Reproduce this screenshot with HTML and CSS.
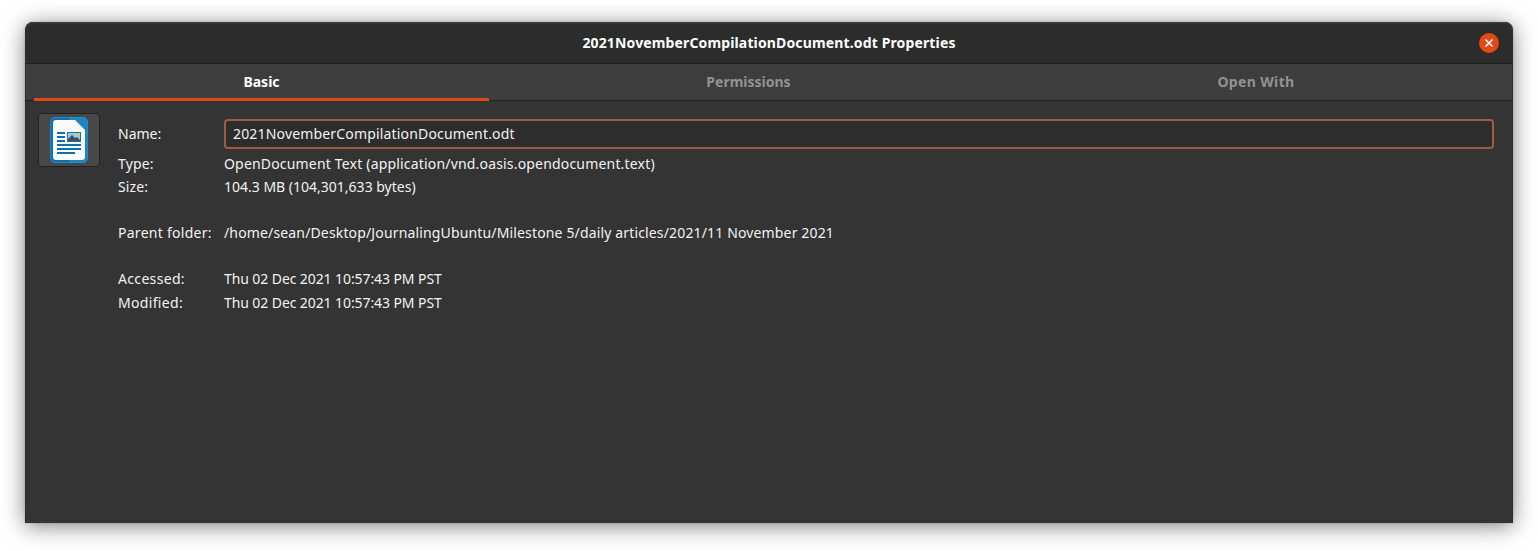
FILE: index.html
```html
<!DOCTYPE html>
<html lang="en">
<head>
<meta charset="utf-8">
<title>2021NovemberCompilationDocument.odt Properties</title>
<link rel="stylesheet" href="styles.css">
</head>
<body>
<main class="window">
  <header class="titlebar">
    <h1 class="title">2021NovemberCompilationDocument.odt Properties</h1>
    <button class="close" aria-label="Close">
      <svg width="20" height="20" viewBox="0 0 20 20"><path d="M6.5 6.5l7 7M13.5 6.5l-7 7" stroke="#fff" stroke-width="1.5"/></svg>
    </button>
  </header>
  <nav class="tabs">
    <div class="tab tab-basic active">Basic</div>
    <div class="tab tab-perm">Permissions</div>
    <div class="tab tab-open">Open With</div>
  </nav>
  <section class="content">
    <button class="file-icon" aria-label="Document icon">
      <svg width="38" height="46" viewBox="0 0 38 46">
        <rect width="38" height="46" rx="5" fill="#1c85c0"/>
        <path d="M5 0h14v46H5a5 5 0 0 1-5-5V5a5 5 0 0 1 5-5z" fill="#0b72ae"/>
        <rect x=".5" y=".5" width="37" height="45" rx="4.5" fill="none" stroke="#2a8fc9" stroke-opacity=".7"/>
        <path d="M6 3h19l10 10v27q0 3-3 3H6q-3 0-3-3V6q0-3 3-3z" fill="#fafafa"/>
        <path d="M7 15h8v2H7zM7 19h8v2H7zM7 23h8v2H7zM7 27h24v2H7zM7 31h24v2H7zM7 35h18v2H7z" fill="#0d70ab"/>
        <path d="M17 15h14v10H17z" fill="#1473ad"/>
        <path d="M18 16h12v8H18z" fill="#8fcdf0"/>
        <path d="M27 16h3v3h-2z" fill="#f6c338"/>
        <path d="M18 24v-2l4-4 3 3 2-1 3 3v1z" fill="#4c4c4c"/>
      </svg>
    </button>
    <dl class="details">
      <dt>Name:</dt>
      <dd class="entry">2021NovemberCompilationDocument.odt</dd>
      <dt class="type">Type:</dt>
      <dd class="mime">OpenDocument Text (application/vnd.oasis.opendocument.text)</dd>
      <dt class="size">Size:</dt>
      <dd>104.3 MB (104,301,633 bytes)</dd>
      <dt class="parent">Parent folder:</dt>
      <dd class="path">/home/sean/Desktop/JournalingUbuntu/Milestone 5/daily articles/2021/11 November 2021</dd>
      <dt class="time-label">Accessed:</dt>
      <dd class="date">Thu 02 Dec 2021 10:57:43 PM PST</dd>
      <dt class="time-label">Modified:</dt>
      <dd class="date">Thu 02 Dec 2021 10:57:43 PM PST</dd>
    </dl>
  </section>
</main>
</body>
</html>
```
FILE: styles.css
```css
* { box-sizing: border-box; }
body {
  margin: 0;
  padding: 22px 25px 28px;
  height: 551px;
  overflow: hidden;
  background: #fff;
  color: #f2f2f2;
  font: 14px/20px "Noto Sans", "Open Sans", sans-serif;
  white-space: nowrap;
}
button { padding: 0; margin: 0; font: inherit; }
svg { display: block; }
.window {
  width: 1488px;
  height: 501px;
  background: #343434;
  border: 1px solid #2f2f2f;
  border-top: 0;
  border-bottom: 0;
  border-radius: 8px 8px 0 0;
  box-shadow: 0 3px 22px rgba(0, 0, 0, .5), 0 0 2px rgba(0, 0, 0, .25);
}
.titlebar {
  display: grid;
  grid-template-columns: 1fr auto 1fr;
  align-items: center;
  height: 42px;
  background: #2c2c2c;
  border-bottom: 1px solid #1f1f1f;
  border-radius: 8px 8px 0 0;
  box-shadow: inset 0 1px #3d3d3d, inset 0 2px #333;
}
.title {
  grid-column: 2;
  margin: 0;
  font-size: 14px;
  font-weight: 700;
  line-height: 20px;
  letter-spacing: .14px;
  color: #fff;
}
.close {
  justify-self: end;
  width: 20px;
  height: 20px;
  margin: 1px 13px 0 0;
  border: 0;
  border-radius: 50%;
  background: #e04a16;
}
.tabs {
  display: flex;
  gap: 8px;
  height: 37px;
  padding: 0 8px;
  background: #3d3d3d;
  border-bottom: 1px solid #222;
}
.tab {
  height: 37px;
  padding-top: 8px;
  text-align: center;
  font-weight: 700;
  color: #929292;
}
.tab-basic { width: 455px; }
.tab-perm { width: 503px; }
.tab-open { width: 496px; letter-spacing: .36px; }
.active { color: #fff; border-bottom: 3px solid #e04a16; }
.content {
  display: flex;
  align-items: flex-start;
  gap: 18px;
  padding: 12px 18px 0 12px;
}
.file-icon {
  display: flex;
  justify-content: center;
  width: 62px;
  height: 54px;
  padding-top: 3px;
  align-items: flex-start;
  border: 1px solid #222;
  border-radius: 4px;
  background: #484848;
}
.details {
  flex: 1;
  display: grid;
  grid-template-columns: 106px 1fr;
  grid-template-rows: 30px 30px 16px 76px 16px 32px;
  align-items: center;
  margin: 6px 0 0;
}
dt, dd { margin: 0; }
.entry {
  height: 30px;
  padding: 3px 7px;
  border: 2px solid #a15a44;
  border-radius: 4px;
  background: #2d2d2d;
  letter-spacing: .17px;
}
.type, .size { letter-spacing: .15px; }
.mime { letter-spacing: .18px; }
.parent { letter-spacing: .27px; }
.path { letter-spacing: .15px; }
.time-label { letter-spacing: .33px; }
.date { letter-spacing: -.09px; }
```
